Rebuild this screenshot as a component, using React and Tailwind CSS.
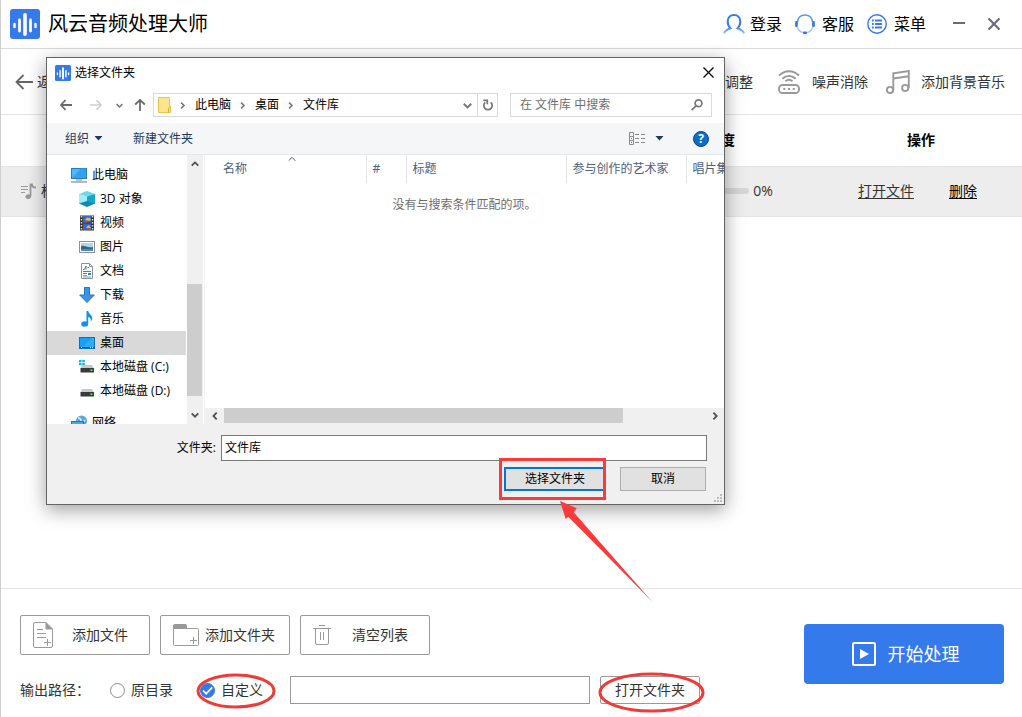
import React, { useState } from 'react';

const Logo = ({ className }) => (
  <svg className={className} viewBox="0 0 30 30" aria-hidden="true">
    <rect width="30" height="30" rx="3" fill="#357aea" />
    <g stroke="#fff" strokeLinecap="round">
      <path d="M4.5 15v3" strokeWidth="2.4" />
      <path d="M9.5 11v11" strokeWidth="2.8" />
      <path d="M15 5.8v19.500" strokeWidth="3.6" />
      <path d="M20.5 11v11" strokeWidth="2.8" />
      <path d="M25.5 15v3" strokeWidth="2.4" />
    </g>
  </svg>
);

const UserIcon = () => (
  <svg width="22" height="20" viewBox="0 0 22 20" fill="none">
    <defs>
      <linearGradient id="userFade" x1="0" y1="0" x2="0" y2="1">
        <stop offset="0.6" stopColor="#357aea" />
        <stop offset="1" stopColor="#9cc1f8" />
      </linearGradient>
    </defs>
    <path
      d="M1 19.500c.8-3 3-4 6.500-5.300C5.600 12.500 4.700 10 4.700 7.500 4.700 3.500 7.300 1 11 1s6.300 2.500 6.300 6.500c0 2.500-.9 5-2.800 6.700 3.500 1.300 5.700 2.300 6.500 5.300"
      stroke="url(#userFade)"
      strokeWidth="2"
    />
  </svg>
);

const HeadsetIcon = () => (
  <svg width="20" height="20" viewBox="0 0 20 20" fill="none">
    <path d="M2.500 8C3 3.500 6 1 10 1s7 2.500 7.500 7" stroke="#5f97f0" strokeWidth="1.500" />
    <path d="M1.500 8.300v3.500M18.500 8.300v3.500" stroke="#357aea" strokeWidth="2.800" strokeLinecap="round" />
    <path d="M2.300 13c.7 2.500 2.500 4.500 5.200 5.400M17.700 13c-.7 2.500-2.500 4.500-5.200 5.400" stroke="#9cc1f8" strokeWidth="1.200" />
    <path d="M9 18.700h2" stroke="#357aea" strokeWidth="2.400" strokeLinecap="round" />
  </svg>
);

const MenuIcon = () => (
  <svg width="20" height="20" viewBox="0 0 20 20" fill="none" stroke="#357aea">
    <circle cx="10" cy="10" r="9.200" strokeWidth="1.400" />
    <path d="M8 6.500h7M8 10h7M8 13.500h7M5 6.500h1.700M5 10h1.700M5 13.500h1.700" strokeWidth="1.800" />
  </svg>
);

const NoiseIcon = () => (
  <svg width="22" height="24" viewBox="0 0 22 24" fill="none" stroke="#999" strokeWidth="1.900">
    <path d="M1 5.700C6.500-.3 15.500-.3 21 5.700" />
    <path d="M4.300 8.700c4-3.800 9.400-3.800 13.400 0" />
    <path d="M7.500 11.300c2-1.700 5-1.700 7 0" />
    <rect x="1" y="15" width="20" height="8" rx="3.500" />
    <path d="M5.300 19h2M10 19h2M14.700 19h2" />
  </svg>
);

const MusicIcon = () => (
  <svg width="24" height="24" viewBox="0 0 24 24" fill="none" stroke="#999" strokeWidth="1.900">
    <circle cx="4" cy="20" r="3.100" />
    <circle cx="19.200" cy="18" r="3.100" />
    <path d="M7.300 20V3.200L22.800 1v17M7.300 8.500l15.500-2.200" />
  </svg>
);

const RowNoteIcon = () => (
  <svg width="17" height="17" viewBox="0 0 17 17" fill="none" stroke="#999">
    <path d="M1 3.500h7M1 6.500h7M1 9.500h4" strokeWidth="1.200" />
    <path d="M10.500 13.500V1.500H12c0 2 1.500 3 4 3" strokeWidth="1.800" />
    <ellipse cx="8.200" cy="13.700" rx="2.400" ry="1.900" fill="#999" />
  </svg>
);

const AddFileIcon = () => (
  <svg width="20" height="26" viewBox="0 0 20 26" fill="none" stroke="#999">
    <path d="M13 .5H2A1.500 1.500 0 0 0 .5 2v22A1.500 1.500 0 0 0 2 25.500h16a1.500 1.500 0 0 0 1.500-1.500V7" />
    <path d="M13 .5v6.500h6.500z" fill="#999" />
    <path d="M4 7.500h6M4 11.500h9M4 15.500h9M11 20.500h7M14.500 17v7" />
  </svg>
);

const AddFolderIcon = () => (
  <svg width="26" height="22" viewBox="0 0 26 22" fill="none" stroke="#999">
    <path d="M.5 4.500h24a1 1 0 0 1 1 1v15a1 1 0 0 1-1 1h-23a1 1 0 0 1-1-1z" />
    <path d="M.5 4V1.500a1 1 0 0 1 1-1h11a1 1 0 0 1 1 1V4z" fill="#999" />
    <path d="M17 16.500h7M20.500 13v7" />
  </svg>
);

const TrashIcon = () => (
  <svg width="18" height="20" viewBox="0 0 18 20" fill="none" stroke="#999">
    <path d="M6 .5h6M0 3.500h18M2.500 3.500V18A1.500 1.500 0 0 0 4 19.500h10a1.500 1.500 0 0 0 1.500-1.500V3.500M7.500 7v8M10.500 7v8" />
  </svg>
);

const PlayIcon = () => (
  <svg width="24" height="24" viewBox="0 0 24 24">
    <rect x="1" y="1" width="22" height="22" rx="1" fill="none" stroke="#fff" strokeWidth="2" />
    <path d="M8 7l9 5-9 5z" fill="#fff" />
  </svg>
);

const Chevron = ({ d, size = 8, color = '#505050', width = 1.8 }) => (
  <svg width={size} height={size} viewBox="0 0 8 8" fill="none" stroke={color} strokeWidth={width}>
    <path d={d} />
  </svg>
);

const UP = 'M.7 5.700L4 2.400l3.300 3.300';
const DOWN = 'M.7 2.400L4 5.700l3.300-3.300';
const LEFT = 'M5.700.7L2.400 4l3.300 3.300';
const RIGHT = 'M2.400.7L5.700 4 2.400 7.300';

const treeIcons = {
  pc: (
    <>
      <rect x=".5" y="1.500" width="15" height="10" fill="#4db8fb" stroke="#2b7cb5" />
      <path d="M1 11l9-9.500h5V11z" fill="#2fa3f2" />
      <path d="M5 13h6" stroke="#6b8aa5" />
      <path d="M0 15h16" stroke="#8ea3b7" strokeWidth="1.500" />
    </>
  ),
  cube: (
    <>
      <path d="M8 0l8 3-8 3-8-3z" fill="#6fd6e6" />
      <path d="M0 3l8 2.500V12L0 13z" fill="#a5ebf2" />
      <path d="M16 3L8 5.500V12l8 1z" fill="#10a9cd" />
      <path d="M0 12.500L8 10l8 2.500L8 16z" fill="#0a8aac" />
    </>
  ),
  video: (
    <>
      <rect x="1" y=".5" width="14" height="15" fill="#333" />
      <path d="M2.500 1v14M13.500 1v14" stroke="#ddd" strokeWidth="1.500" strokeDasharray="1.500 1.500" />
      <rect x="4" y="1" width="8" height="6.500" fill="#3565d8" />
      <rect x="4" y="8.500" width="8" height="6.500" fill="#3565d8" />
      <path d="M6 5l2-2.500L11 3l1 2-2 1zM7 12l3-2 2 3-3 1z" fill="#e9b92c" />
      <path d="M5 6h3v1.500H5zM8 13h3v1H8z" fill="#c84d2f" />
    </>
  ),
  picture: (
    <>
      <rect x=".5" y="2.500" width="15" height="11" fill="#fff" stroke="#8b9299" />
      <rect x="2" y="4" width="12" height="8" fill="#a9d8f5" />
      <path d="M2 7c4-1 6 2 12 1v4H2z" fill="#386a70" />
      <path d="M2 10.500c4-1 8 0 12-.5v2H2z" fill="#4f8cc0" />
    </>
  ),
  doc: (
    <>
      <path d="M2.500.5h8l3 3v12h-11z" fill="#fff" stroke="#8b9299" />
      <path d="M10.500.5v3h3" fill="none" stroke="#8b9299" />
      <path d="M4 6.500h1.500L7 3v3.500M8.500 4.500H10M4 8.500h8M4 10.500h4" fill="none" stroke="#2d86cb" />
      <path d="M9 10h3v2H9z" fill="#2d86cb" />
      <path d="M4 12.500h4M4 14h8" stroke="#829fae" />
    </>
  ),
  download: <path d="M5.500.5h5v7.500h4.800L8 15.500.7 8h4.800z" fill="#3b93e8" stroke="#2874c0" />,
  music: (
    <>
      <path d="M7.500 0h1.700c.3 3 4.300 4 4 7.500-.1 1.500-.8 2.500-1.500 3.200.6-2.700-.3-4-2.500-4.600V13H7.500z" fill="#0a93f0" />
      <ellipse cx="5.700" cy="13" rx="3.500" ry="2.800" fill="#0a93f0" />
    </>
  ),
  desktop: (
    <>
      <rect x=".5" y="2.500" width="15" height="11" fill="#16a0fb" stroke="#1070b5" />
      <path d="M4 12l9-9h2v9z" fill="#2cacff" />
      <path d="M1 12.500h14" stroke="#0b5b99" />
      <path d="M2 12.500h1M11 12.500h1M13 12.500h1" stroke="#fff" />
    </>
  ),
  diskC: (
    <>
      <path d="M0 1h2.500v2.300H0zM3.300 1h2.500v2.300H3.300zM0 4h2.500v2.300H0zM3.300 4h2.500v2.300H3.300z" fill="#08b3f0" />
      <path d="M3 6h10l2 3.500H1.500z" fill="#c9c9c9" />
      <rect x="1.500" y="9" width="13.500" height="4.500" fill="#3a3a3a" />
      <rect x="11.500" y="10.500" width="2" height="1.500" fill="#4cf35d" />
    </>
  ),
  diskD: (
    <>
      <path d="M3 6h10l2 3.500H1.500z" fill="#c9c9c9" />
      <rect x="1.500" y="9" width="13.500" height="4.500" fill="#3a3a3a" />
      <rect x="11.500" y="10.500" width="2" height="1.500" fill="#4cf35d" />
    </>
  ),
  network: (
    <>
      <circle cx="10.500" cy="6" r="5.500" fill="#5aa9d6" />
      <path d="M7 3c2 0 3 1 3 3s3 1 4-1" fill="none" stroke="#d9eef8" strokeWidth="1.500" />
      <rect x=".5" y="6.500" width="12" height="8" fill="#3cacf4" stroke="#2873a8" />
    </>
  ),
};

const TreeIcon = ({ name }) => (
  <svg className="shrink-0" width="16" height="16" viewBox="0 0 16 16">
    {treeIcons[name]}
  </svg>
);

const treeItems = [
  { icon: 'cube', label: '3D 对象' },
  { icon: 'video', label: '视频' },
  { icon: 'picture', label: '图片' },
  { icon: 'doc', label: '文档' },
  { icon: 'download', label: '下载' },
  { icon: 'music', label: '音乐' },
  { icon: 'desktop', label: '桌面' },
  { icon: 'diskC', label: '本地磁盘 (C:)' },
  { icon: 'diskD', label: '本地磁盘 (D:)' },
];

const crumbs = ['此电脑', '桌面', '文件库'];

function FolderTree() {
  const [selected, setSelected] = useState('桌面');

  return (
    <div className="flex w-[156px] shrink-0">
      <div className="min-w-0 flex-1 overflow-hidden pt-2 pr-px">
        <button className="flex h-6 w-full items-center gap-[5px] pl-6">
          <TreeIcon name="pc" />
          此电脑
        </button>
        <ul>
          {treeItems.map((item) => (
            <li key={item.label}>
              <button
                onClick={() => setSelected(item.label)}
                className={`flex h-6 w-full items-center gap-[5px] pl-8 whitespace-nowrap ${
                  selected === item.label ? 'bg-[#d9d9d9]' : ''
                }`}
              >
                <TreeIcon name={item.icon} />
                {item.label}
              </button>
            </li>
          ))}
        </ul>
        <button className="mt-2 flex h-6 w-full items-center gap-[5px] pl-6">
          <TreeIcon name="network" />
          网络
        </button>
      </div>
      <div className="flex w-4 flex-col items-center bg-[#f0f0f0]">
        <span className="flex h-[18px] items-center"><Chevron d={UP} /></span>
        <div className="flex w-full flex-1 flex-col justify-end pb-[10px]">
          <div className="mr-px h-28 bg-[#cdcdcd]" />
        </div>
        <span className="flex h-[18px] items-center"><Chevron d={DOWN} /></span>
      </div>
    </div>
  );
}

function FileList() {
  return (
    <div className="ml-px flex min-w-0 flex-1 flex-col border-l border-[#f0f0f0]">
      <div className="flex-1 overflow-hidden">
        <table className="w-full table-fixed text-left">
          <thead className="text-[#4c607a]">
            <tr className="h-7">
              <th className="relative w-[161px] border-r border-[#e5e5e5] pl-[18px] font-normal">
                名称
                <span className="absolute top-0 left-[83px]"><Chevron d={UP} width={1} /></span>
              </th>
              <th className="w-10 border-r border-[#e5e5e5] pl-[6px] font-normal">#</th>
              <th className="w-40 border-r border-[#e5e5e5] pl-[6px] font-normal">标题</th>
              <th className="w-[120px] border-r border-[#e5e5e5] pl-[6px] font-normal">参与创作的艺术家</th>
              <th className="overflow-hidden pl-[6px] font-normal whitespace-nowrap">唱片集</th>
            </tr>
          </thead>
          <tbody>
            <tr>
              <td colSpan="5" className="pt-[14px] text-center text-[#6d6d6d]">没有与搜索条件匹配的项。</td>
            </tr>
          </tbody>
        </table>
      </div>
      <div className="flex h-4 bg-[#f0f0f0]">
        <span className="flex w-[19px] items-center justify-center"><Chevron d={LEFT} /></span>
        <div className="flex-1">
          <div className="h-[15px] w-[399px] bg-[#cdcdcd]" />
        </div>
        <span className="flex w-[18px] items-center justify-center"><Chevron d={RIGHT} /></span>
      </div>
    </div>
  );
}

function FolderDialog() {
  const [folder, setFolder] = useState('文件库');

  return (
    <div
      role="dialog"
      aria-labelledby="dialog-title"
      className="absolute top-[57px] left-[45px] w-[679px] border border-[#646464] bg-white text-xs text-black shadow-[0_5px_18px_rgba(0,0,0,0.38)]"
    >
      <div className="flex h-[29px] items-center pr-[10px] pl-2">
        <Logo className="h-4 w-4" />
        <h2 id="dialog-title" className="ml-1 flex-1">选择文件夹</h2>
        <button aria-label="关闭">
          <svg width="11" height="11" viewBox="0 0 11 11" stroke="#000" strokeWidth="1.200">
            <path d="M.5.5l10 10M10.500.5l-10 10" />
          </svg>
        </button>
      </div>

      <div className="flex h-9 items-center pr-3 pl-[13px]">
        <button aria-label="后退">
          <svg width="12" height="12" viewBox="0 0 12 12" fill="none" stroke="#6b6b6b" strokeWidth="1.800">
            <path d="M12 6H1M5.500 1.200L.9 6l4.600 4.800" />
          </svg>
        </button>
        <button aria-label="前进" className="ml-[18px]">
          <svg width="12" height="12" viewBox="0 0 12 12" fill="none" stroke="#cfcfcf" strokeWidth="1.600">
            <path d="M0 6h11M6.500 1.200L11.100 6l-4.600 4.800" />
          </svg>
        </button>
        <button aria-label="最近" className="ml-[14px]"><Chevron d={DOWN} size={7} color="#777" /></button>
        <button aria-label="向上" className="ml-[11px]">
          <svg width="12" height="12" viewBox="0 0 12 12" fill="none" stroke="#6b6b6b" strokeWidth="1.800">
            <path d="M6 12V1M1.200 5.500L6 .9l4.800 4.600" />
          </svg>
        </button>
        <div className="ml-[7px] flex h-6 w-[345px] items-center border border-[#d9d9d9]">
          <svg className="ml-1" width="13" height="16" viewBox="0 0 13 16">
            <path d="M.5.5h11v9h1v6H.5z" fill="#fde48f" stroke="#edc54a" />
            <path d="M10.500 15.500v-4.500l2-1.500" fill="none" stroke="#e0b32f" />
          </svg>
          {crumbs.map((crumb) => (
            <React.Fragment key={crumb}>
              <span className="ml-2"><Chevron d={RIGHT} size={7} color="#777" /></span>
              <button className="ml-[9px]">{crumb}</button>
            </React.Fragment>
          ))}
          <button aria-label="展开" className="mr-[5px] ml-auto"><Chevron d={DOWN} size={9} color="#777" /></button>
          <button aria-label="刷新" className="flex h-full w-5 items-center justify-center border-l border-[#d9d9d9]">
            <svg width="12" height="12" viewBox="0 0 12 12" fill="none" stroke="#777" strokeWidth="1.700">
              <path d="M8.700 3.300A4.200 4.200 0 1 1 3.300 3.300" />
              <path d="M1.300 1.300h4v4" />
            </svg>
          </button>
        </div>
        <div className="ml-3 flex h-6 flex-1 items-center border border-[#d9d9d9] pr-2 pl-[9px]">
          <input
            type="text"
            aria-label="搜索"
            placeholder="在 文件库 中搜索"
            className="min-w-0 flex-1 outline-none placeholder:text-[#6d6d6d]"
          />
          <svg width="12" height="12" viewBox="0 0 12 12" fill="none" stroke="#777" strokeWidth="1.700">
            <circle cx="7.500" cy="4.200" r="3.400" />
            <path d="M5 6.800L.6 11.200" />
          </svg>
        </div>
      </div>

      <div className="flex h-8 items-center border-b border-[#e5e7ea] bg-[#f5f6f8] pr-[15px] pl-[18px] text-[#1e395b]">
        <button className="flex items-center gap-[5px]">
          组织
          <svg width="9" height="5" viewBox="0 0 9 5" fill="#1e395b"><path d="M.5 0h8l-4 4.500z" /></svg>
        </button>
        <button className="ml-[30px]">新建文件夹</button>
        <button aria-label="视图" className="ml-auto flex items-center gap-[10px]">
          <svg width="16" height="13" viewBox="0 0 16 13" fill="none" stroke="#8a8a8a">
            <path d="M.5.5h4v12h-4zM.5 4.500h4M.5 8.500h4M6 2.500h4M12 2.500h4M6 6.500h4M12 6.500h4M6 10.500h4M12 10.500h4" />
            <path d="M2 6.500h1" stroke="#3b8ad8" />
            <path d="M2 10.500h1" stroke="#d33" />
          </svg>
          <svg width="9" height="5" viewBox="0 0 9 5" fill="#1e395b"><path d="M.5 0h8l-4 4.500z" /></svg>
        </button>
        <button
          aria-label="帮助"
          className="ml-[29px] flex h-4 w-4 items-center justify-center rounded-full border border-[#0a4b8c] bg-[#0b6cc9] font-bold text-white"
        >
          ?
        </button>
      </div>

      <div className="flex h-[269px]">
        <FolderTree />
        <FileList />
      </div>

      <div className="relative bg-[#f0f0f0] pt-[11px] pr-[17px] pb-[13px]">
        <div className="flex items-center justify-end">
          <label htmlFor="folder" className="mr-[5px]">文件夹:</label>
          <input
            id="folder"
            type="text"
            value={folder}
            onChange={(e) => setFolder(e.target.value)}
            className="h-[26px] w-[486px] border border-[#7a7a7a] bg-white px-[3px] pb-[2px] outline-none"
          />
        </div>
        <div className="mt-[6px] flex justify-end gap-[14px] pr-px">
          <div className="relative">
            <button className="h-6 w-[102px] border-2 border-[#0078d7] bg-[#e1e1e1]">选择文件夹</button>
            <span className="pointer-events-none absolute -top-[9px] right-0 -bottom-[9px] -left-[5px] border-[3px] border-[#fb3b3b]" />
            <svg className="pointer-events-none absolute top-[34px] left-14" width="94" height="102" viewBox="0 0 94 102" fill="#fb3b3b">
              <path d="M0 0l16.700 7.300-3 4L92.500 101 8.300 15.700 5.700 18z" />
            </svg>
          </div>
          <button className="h-6 w-[86px] border border-[#adadad] bg-[#e1e1e1]">取消</button>
        </div>
        <svg className="absolute right-[2px] bottom-[2px]" width="8" height="8" viewBox="0 0 8 8" fill="#bdbdbd">
          <path d="M6 0h2v2H6zM3 3h2v2H3zM6 3h2v2H6zM0 6h2v2H0zM3 6h2v2H3zM6 6h2v2H6z" />
        </svg>
      </div>
    </div>
  );
}

const Ellipse = ({ className }) => (
  <svg
    className={`pointer-events-none absolute overflow-visible ${className}`}
    viewBox="0 0 100 100"
    preserveAspectRatio="none"
    fill="none"
    stroke="#f03a36"
    strokeWidth="3"
  >
    <ellipse cx="50" cy="50" rx="50" ry="50" vectorEffect="non-scaling-stroke" />
  </svg>
);

function OutputRadio({ id, label, value, output, setOutput }) {
  return (
    <span className="flex items-center">
      <span className="relative flex">
        <input
          id={id}
          type="radio"
          name="output"
          checked={output === value}
          onChange={() => setOutput(value)}
          className="h-[15px] w-[15px] appearance-none rounded-full border border-[#8c8c8c] bg-white checked:border-[#357aea] checked:bg-[#357aea]"
        />
        {output === value && (
          <svg className="pointer-events-none absolute inset-0" width="15" height="15" viewBox="0 0 15 15" fill="none" stroke="#fff" strokeWidth="1.700">
            <path d="M3 7.500l3.200 3.200 6-6.400" />
          </svg>
        )}
      </span>
      <label htmlFor={id} className="ml-[6px]">{label}</label>
    </span>
  );
}

function App() {
  const [output, setOutput] = useState('custom');
  const [path, setPath] = useState('');

  return (
    <div className="relative flex min-h-screen flex-col overflow-hidden border-l border-[#cfcfcf] bg-white font-['Open_Sans','Noto_Sans_CJK_SC',sans-serif] text-sm text-[#333]">
      <header className="flex h-[49px] items-center border-b border-[#d9d9d9] pr-[22px] pl-[9px] text-base text-black">
        <Logo className="h-[30px] w-[30px]" />
        <h1 className="ml-2 flex-1 text-xl">风云音频处理大师</h1>
        <button className="flex items-center gap-[5px]"><UserIcon />登录</button>
        <button className="ml-[13px] flex items-center gap-[7px]"><HeadsetIcon />客服</button>
        <button className="ml-[13px] flex items-center gap-[7px]"><MenuIcon />菜单</button>
        <button aria-label="最小化" className="ml-[27px]">
          <svg width="12" height="12" viewBox="0 0 12 12" stroke="#6f6a78" strokeWidth="2"><path d="M0 5h12" /></svg>
        </button>
        <button aria-label="关闭窗口" className="ml-[23px]">
          <svg width="12" height="12" viewBox="0 0 12 12" stroke="#6f6a78" strokeWidth="2.200"><path d="M.5.5l11 11M11.500.5l-11 11" /></svg>
        </button>
      </header>

      <nav className="flex h-[66px] items-center border-b border-[#e4e4e4] pr-[17px] pl-[14px]">
        <button className="flex items-center gap-1">
          <svg width="18" height="16" viewBox="0 0 18 16" fill="none" stroke="#666" strokeWidth="1.800">
            <path d="M18 8H1.500M8.500 1L1.500 8l7 7" />
          </svg>
          返回
        </button>
        <button className="ml-auto">调整</button>
        <button className="ml-[25px] flex items-center gap-3"><NoiseIcon />噪声消除</button>
        <button className="ml-[18px] flex items-center gap-[11px]"><MusicIcon />添加背景音乐</button>
      </nav>

      <main className="flex-1">
        <table className="w-full table-fixed">
          <thead className="text-black">
            <tr className="h-[51px] border-b border-[#e4e4e4]">
              <th />
              <th className="w-[198px]">进度</th>
              <th className="w-[202px]">操作</th>
            </tr>
          </thead>
          <tbody>
            <tr className="h-[50px] border-b border-[#e4e4e4] bg-[#ededed]">
              <td className="pl-[19px]">
                <span className="flex items-center gap-1"><RowNoteIcon />标</span>
              </td>
              <td>
                <div className="flex items-center justify-center gap-1">
                  <div className="h-[6px] w-20 rounded-sm bg-[#d6d6d6]" />
                  0%
                </div>
              </td>
              <td>
                <div className="flex justify-center gap-[35px] pr-[7px]">
                  <a href="#open" className="underline underline-offset-2">打开文件</a>
                  <a href="#delete" className="text-black underline underline-offset-2">删除</a>
                </div>
              </td>
            </tr>
          </tbody>
        </table>
      </main>

      <footer className="flex items-start justify-between border-t border-[#e4e4e4] pt-[26px] pr-[18px] pb-[13px] pl-[19px]">
        <div className="flex flex-col gap-[21px]">
          <div className="flex gap-[10px]">
            <button className="flex h-10 w-[130px] items-center gap-[19px] rounded-xs border border-[#999] pl-3">
              <AddFileIcon />添加文件
            </button>
            <button className="flex h-10 w-[130px] items-center gap-[6px] rounded-xs border border-[#999] pl-3">
              <AddFolderIcon />添加文件夹
            </button>
            <button className="flex h-10 w-[130px] items-center gap-[21px] rounded-xs border border-[#999] pl-3">
              <TrashIcon />清空列表
            </button>
          </div>
          <div className="flex h-7 items-center">
            <span className="w-[90px]">输出路径：</span>
            <OutputRadio id="out-source" label="原目录" value="source" output={output} setOutput={setOutput} />
            <span className="relative ml-[27px]">
              <OutputRadio id="out-custom" label="自定义" value="custom" output={output} setOutput={setOutput} />
              <Ellipse className="-top-[5px] -left-[2px] h-8 w-[76px]" />
            </span>
            <input
              type="text"
              aria-label="输出路径"
              value={path}
              onChange={(e) => setPath(e.target.value)}
              className="ml-[27px] h-7 w-[300px] border border-[#999] px-2 outline-none"
            />
            <span className="relative ml-[10px]">
              <button className="h-7 w-[100px] rounded-xs border border-[#999]">打开文件夹</button>
              <Ellipse className="-top-[2px] left-0 h-[37px] w-[103px]" />
            </span>
          </div>
        </div>
        <button className="mt-[9px] flex h-[60px] w-[200px] items-center justify-center gap-3 rounded-sm bg-[#357aea] pl-[3px] text-lg text-white">
          <PlayIcon />开始处理
        </button>
      </footer>

      <FolderDialog />
    </div>
  );
}

export default App;
